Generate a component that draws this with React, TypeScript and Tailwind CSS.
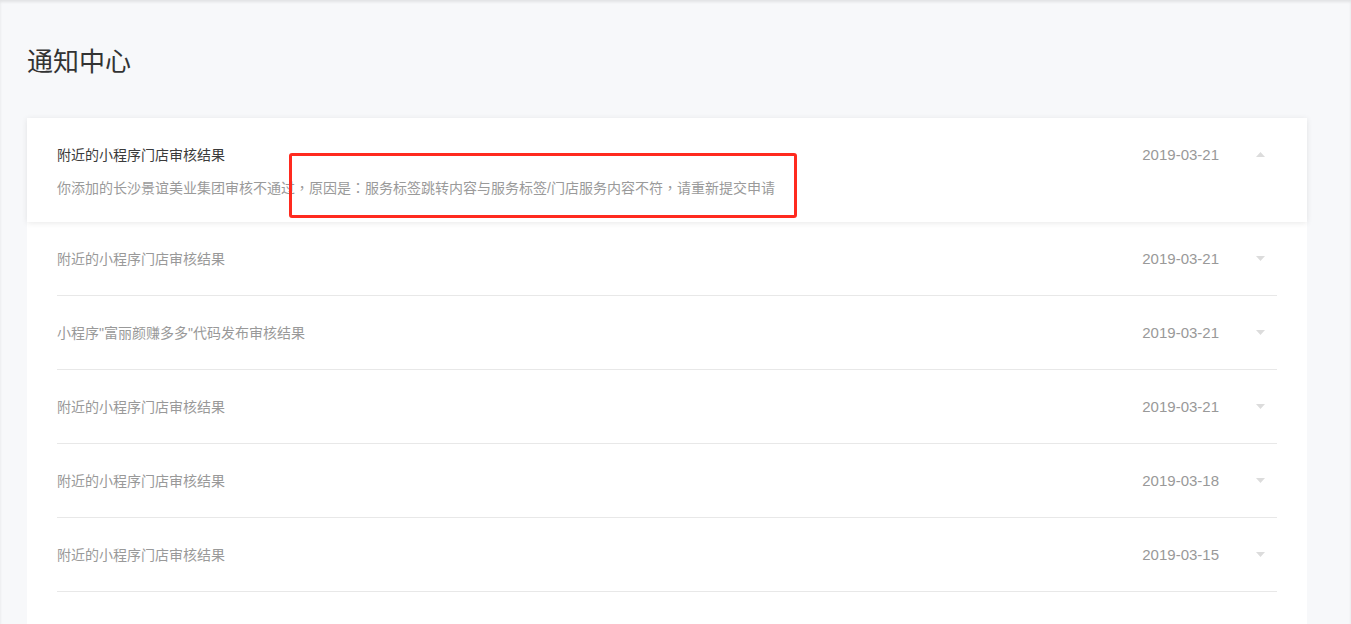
import React from "react";

const items = [
  { title: "附近的小程序门店审核结果", date: "2019-03-21" },
  { title: "小程序\"富丽颜赚多多\"代码发布审核结果", date: "2019-03-21" },
  { title: "附近的小程序门店审核结果", date: "2019-03-21" },
  { title: "附近的小程序门店审核结果", date: "2019-03-18" },
  { title: "附近的小程序门店审核结果", date: "2019-03-15" },
];

function Caret({ up }: { up?: boolean }) {
  return (
    <svg width="9" height="5" viewBox="0 0 9 5" className="block">
      {up ? <path d="M0 5 L4.5 0 L9 5 Z" fill="#dcdcdc" /> : <path d="M0 0 L4.5 5 L9 0 Z" fill="#dcdcdc" />}
    </svg>
  );
}

function P({ c }: { c: string }) {
  return (
    <span lang="zh-Hant-TW" style={{ fontFamily: '"Noto Sans CJK TC", sans-serif' }}>
      {c}
    </span>
  );
}

export default function App() {
  const font = { fontFamily: '"Liberation Sans", "Noto Sans CJK SC", sans-serif' };
  return (
    <div
      className="relative h-screen overflow-hidden bg-[#f7f8fa] px-[27px] shadow-[inset_0_2px_3px_rgba(0,0,0,0.09)]"
      style={font}
    >
      <h1 className="pt-[44px] text-[26px] leading-[36px] text-[#333] font-normal mb-[38px]">通知中心</h1>
      <div className="w-[1280px] bg-white pb-[40px]">
        <div className="relative z-10 h-[104px] bg-white px-[30px] shadow-[0_1px_6px_rgba(0,0,0,0.09)] flex">
          <div className="flex-1 pt-[27px]">
            <div className="text-[14px] leading-[20px] text-[#3a3a3a]">附近的小程序门店审核结果</div>
            <div className="mt-[12px] text-[14px] leading-[20px] text-[#9a9a9a]">
              你添加的长沙景谊美业集团审核不通过<P c="，" />原因是<P c="：" />服务标签跳转内容与服务标签/门店服务内容不符<P c="，" />请重新提交申请
            </div>
          </div>
          <div className="flex items-start pt-[27px]">
            <span className="text-[15px] leading-[20px] text-[#999]">2019-03-21</span>
            <span className="ml-[37px] mr-[12px] mt-[7px]">
              <Caret up />
            </span>
          </div>
        </div>
        <div className="px-[30px]">
          {items.map((it, i) => (
            <div key={i} className="h-[74px] flex items-center border-b border-[#e8e8e8]">
              <div className="flex-1 text-[14px] leading-[20px] text-[#999]">{it.title}</div>
              <span className="text-[15px] leading-[20px] text-[#999]">{it.date}</span>
              <span className="ml-[37px] mr-[12px]">
                <Caret />
              </span>
            </div>
          ))}
        </div>
      </div>
      <div className="absolute z-20 left-[289px] top-[153px] w-[508px] h-[65px] border-[3px] border-[#ff2a1f] rounded-[3px] pointer-events-none" />
    </div>
  );
}
